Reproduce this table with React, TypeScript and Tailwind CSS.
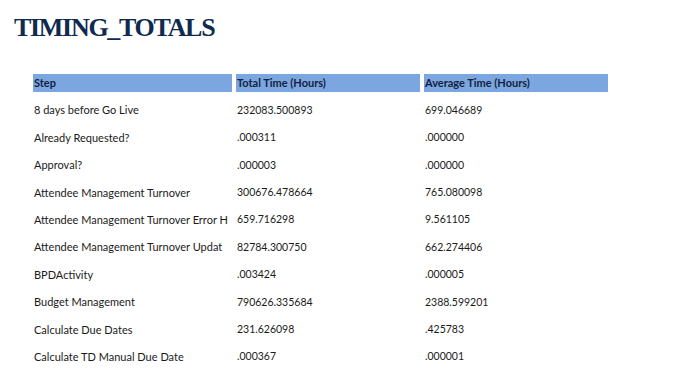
const rows: [string, string, string][] = [
  ["8 days before Go Live", "232083.500893", "699.046689"],
  ["Already Requested?", ".000311", ".000000"],
  ["Approval?", ".000003", ".000000"],
  ["Attendee Management Turnover", "300676.478664", "765.080098"],
  ["Attendee Management Turnover Error H", "659.716298", "9.561105"],
  ["Attendee Management Turnover Updat", "82784.300750", "662.274406"],
  ["BPDActivity", ".003424", ".000005"],
  ["Budget Management", "790626.335684", "2388.599201"],
  ["Calculate Due Dates", "231.626098", ".425783"],
  ["Calculate TD Manual Due Date", ".000367", ".000001"],
];

function App() {
  return (
    <div className="w-[697px] h-[374px] bg-white overflow-hidden font-['Lato',sans-serif]">
      <h1 className="pl-[14px] pt-[15px] text-[26px] leading-[26px] font-bold tracking-[-1.3px] text-[#0e2a4e] font-['Liberation_Serif',serif]">
        TIMING_TOTALS
      </h1>

      <div className="ml-[33px] mt-[33px] w-[575px]">
        <div className="grid grid-cols-[199px_184px_184px] gap-x-[4px] text-[11px] font-bold text-[#14233f]">
          <div className="h-[18px] bg-[#7ba6e0] flex items-center pl-[1px]">Step</div>
          <div className="h-[18px] bg-[#7ba6e0] flex items-center pl-[1px]">Total Time (Hours)</div>
          <div className="h-[18px] bg-[#7ba6e0] flex items-center pl-[1px]">Average Time (Hours)</div>
        </div>

        <div className="mt-[5px]">
          {rows.map((r) => (
            <div
              key={r[0]}
              className="grid grid-cols-[199px_184px_184px] gap-x-[4px] h-[27.4px] items-center text-[#1a1a1a]"
            >
              <div className="pl-[1px] whitespace-nowrap text-[11px]">{r[0]}</div>
              <div className="pl-[1px] whitespace-nowrap text-[10.5px]">{r[1]}</div>
              <div className="pl-[1px] whitespace-nowrap text-[10.5px]">{r[2]}</div>
            </div>
          ))}
        </div>
      </div>
    </div>
  );
}

export default App;
